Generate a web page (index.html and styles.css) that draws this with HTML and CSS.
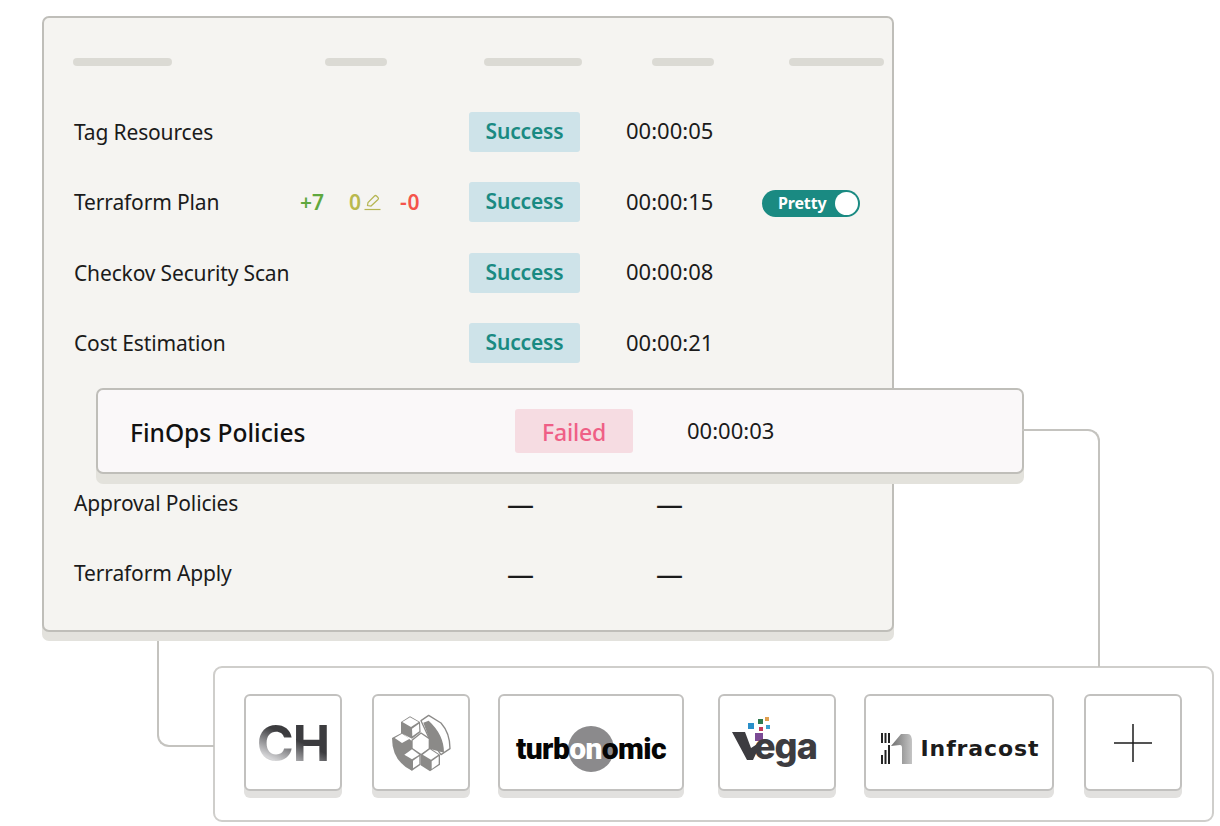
FILE: index.html
```html
<!DOCTYPE html>
<html lang="en">
<head>
    <meta charset="UTF-8">
    <title>Pipeline Steps</title>
    <link rel="stylesheet" href="styles.css">
</head>
<body>
<div class="stage">
    <div class="panel">
        <div class="head-row">
            <span class="bar bar-name"></span>
            <span class="bar bar-changes"></span>
            <span class="bar bar-status"></span>
            <span class="bar bar-time"></span>
            <span class="bar bar-extra"></span>
        </div>

        <div class="step">
            <span class="step-name">Tag Resources</span>
            <span></span>
            <span class="badge">Success</span>
            <span class="step-time">00:00:05</span>
        </div>
        <div class="step">
            <span class="step-name">Terraform Plan</span>
            <span class="changes">
                <span class="added">+7</span>
                <span class="edited">0
                    <svg class="pencil" width="17" height="17" viewBox="0 0 17 17" fill="none" stroke="#b5b552" stroke-width="1.200">
                        <path d="M3.500 11.500 L4 8.500 L10.500 2 Q11.500 1 12.500 2 L14 3.500 Q15 4.500 14 5.500 L7 12 Z"/>
                        <path d="M0.500 15.500 H16.500"/>
                    </svg>
                </span>
                <span class="removed">-0</span>
            </span>
            <span class="badge">Success</span>
            <span class="step-time">00:00:15</span>
            <span class="toggle">Pretty<span class="knob"></span></span>
        </div>
        <div class="step">
            <span class="step-name">Checkov Security Scan</span>
            <span></span>
            <span class="badge">Success</span>
            <span class="step-time">00:00:08</span>
        </div>
        <div class="step">
            <span class="step-name">Cost Estimation</span>
            <span></span>
            <span class="badge">Success</span>
            <span class="step-time">00:00:21</span>
        </div>

        <div class="step-gap"></div>

        <div class="step">
            <span class="step-name">Approval Policies</span>
            <span></span>
            <span class="dash dash-status">—</span>
            <span class="dash">—</span>
        </div>
        <div class="step">
            <span class="step-name">Terraform Apply</span>
            <span></span>
            <span class="dash dash-status">—</span>
            <span class="dash">—</span>
        </div>

        <div class="failed-step">
            <span class="failed-name">FinOps Policies</span>
            <span class="badge-failed">Failed</span>
            <span class="failed-time">00:00:03</span>
        </div>
    </div>

    <div class="line line-left"></div>
    <div class="line line-right"></div>

    <div class="tray">
        <div class="tool tool-square"><span class="logo-ch">CH</span></div>

        <div class="tool tool-square">
            <svg width="70" height="70" viewBox="0 0 210 210" stroke-linejoin="round">
                <!-- back arc -->
                <path d="M105 38 L128 22 L165 45 Q192 75 192 122 L165 140 L130 92 Z" fill="#fff" stroke="#8b8a88" stroke-width="4"/>
                <path d="M112 44 L128 38 Q174 80 174 134 L130 122 L130 92 Z" fill="#8b8a88"/>
                <!-- left body -->
                <path d="M18 90 L48 74 L78 100 L82 170 L78 188 Q18 160 18 90 Z" fill="#8b8a88"/>
                <!-- top cube -->
                <path d="M45 42 L72 25 L102 42 L104 72 L78 92 L45 75 Z" fill="#8b8a88"/>
                <path d="M49 42 L72 28 L98 42 L75 57 Z" fill="#fff"/>
                <path d="M78 62 L99 47 L100 70 L79 85 Z" fill="#fff"/>
                <!-- left top -->
                <path d="M26 90 L48 77 L71 92 L48 105 Z" fill="#fff"/>
                <!-- centre hexagon -->
                <path d="M78 97 L105 75 L130 92 L130 122 L105 140 L78 122 Z" fill="#fff" stroke="#8b8a88" stroke-width="4"/>
                <!-- lower left cube -->
                <path d="M50 140 L78 120 L104 140 L104 170 L78 188 L50 162 Z" fill="#8b8a88"/>
                <path d="M55 140 L78 124 L100 140 L78 154 Z" fill="#fff"/>
                <path d="M81 158 L100 145 L100 168 L81 181 Z" fill="#fff"/>
                <!-- lower right cube -->
                <path d="M104 140 L132 120 L162 140 L162 170 L132 190 L104 172 Z" fill="#8b8a88"/>
                <path d="M110 140 L132 124 L157 140 L135 155 Z" fill="#fff"/>
                <path d="M137 160 L158 145 L158 168 L137 183 Z" fill="#fff"/>
            </svg>
        </div>

        <div class="tool tool-turbo">
            <span class="turbo-circle"></span>
            <span class="logo-turbo">turb<span class="turbo-on">on</span>omic</span>
        </div>

        <div class="tool tool-vega">
            <svg width="92" height="56" viewBox="0 0 92 56">
                <rect x="17" y="8" width="6" height="6" fill="#2a8fc9"/>
                <rect x="27" y="4" width="5" height="5" fill="#2c7a4f"/>
                <rect x="28" y="12" width="4" height="4" fill="#c23a5a"/>
                <rect x="34" y="2" width="4" height="4" fill="#e0a050"/>
                <rect x="35" y="10" width="4" height="4" fill="#3a9fd0"/>
                <rect x="24" y="18" width="8" height="8" fill="#7b4a95"/>
                <path d="M1 17 H14 L20 33 L31 26 L22 45 H16 Z" fill="#3d3c40"/>
                <text class="logo-vega" x="23" y="44">ega</text>
            </svg>
        </div>

        <div class="tool tool-infra">
            <svg width="34" height="34" viewBox="0 0 34 34">
                <defs>
                    <linearGradient id="infraFill" x1="0" y1="0" x2="1" y2="0">
                        <stop offset="0" stop-color="#6f6f6f"/>
                        <stop offset="1" stop-color="#c4c4c4"/>
                    </linearGradient>
                </defs>
                <path d="M2 1h2v10H2zM5.500 1h2v10h-2zM9 1h2v10H9zM2 23h2v9H2zM5.500 18h2v14h-2zM9 13h2v19H9z" fill="#222"/>
                <path d="M12 14 L22 2 H29 Q33 2 33 10 V32 H23 V16 Q23 13 21 13 Z" fill="url(#infraFill)"/>
            </svg>
            <span class="logo-infra">Infracost</span>
        </div>

        <div class="tool tool-square">
            <svg width="38" height="38" viewBox="0 0 38 38" stroke="#1c1c1c" stroke-width="1.500">
                <path d="M0 19 H38 M19 0 V38"/>
            </svg>
        </div>
    </div>
</div>
</body>
</html>
```

FILE: styles.css
```css
body {
    margin: 0;
    background-color: #fff;
    font-family: 'Noto Sans', sans-serif;
    color: #1b1b1b;
}
.stage {
    position: relative;
    width: 1220px;
    height: 826px;
    overflow: hidden;
    padding-top: 16px;
    box-sizing: border-box;
}

/* Main panel */
.panel {
    position: relative;
    box-sizing: border-box;
    width: 852px;
    height: 616px;
    margin-left: 42px;
    padding: 40px 8px 0 30px;
    background-color: #f5f4f1;
    border: 2px solid #bfbeb9;
    border-radius: 7px;
    box-shadow: 0 9px 0 #e3e2dd;
}
.head-row {
    display: grid;
    grid-template-columns: 252px 159px 168px 137px 95px;
    height: 38.8px;
    margin-left: -1px;
}
.bar {
    display: block;
    height: 8px;
    background-color: #dbdad4;
    border-radius: 4px;
}
.bar-name { width: 99px; }
.bar-changes { width: 62px; }
.bar-status { width: 98px; }
.bar-time { width: 62px; }
.bar-extra { width: 95px; }

.step {
    display: grid;
    grid-template-columns: 226px 169px 157px 136px 98px;
    align-items: center;
    height: 70.4px;
    font-size: 21px;
    letter-spacing: -0.15px;
    white-space: nowrap;
}
.step-gap {
    height: 89px;
}
.step-time {
    margin-top: -3px;
    font-size: 22px;
    letter-spacing: 0;
}
.changes {
    display: flex;
    font-size: 21px;
    font-weight: 600;
    letter-spacing: 0;
}
.added {
    width: 49px;
    color: #5fa83f;
}
.edited {
    display: flex;
    align-items: center;
    width: 51px;
    color: #b9b94e;
}
.pencil {
    margin-left: 3px;
}
.removed {
    color: #f4544b;
    letter-spacing: 0.8px;
}
.badge {
    display: block;
    width: 111px;
    height: 40px;
    line-height: 38px;
    text-align: center;
    font-size: 21px;
    font-weight: 600;
    color: #1a8a82;
    background-color: #cee3e9;
    border-radius: 3px;
}
.toggle {
    display: flex;
    justify-content: space-between;
    align-items: center;
    box-sizing: border-box;
    width: 98px;
    height: 27px;
    margin-top: 2px;
    padding: 0 2px 0 16px;
    font-size: 16px;
    font-weight: 700;
    color: #fff;
    background-color: #1a8a82;
    border-radius: 14px;
}
.knob {
    width: 23px;
    height: 23px;
    background-color: #fff;
    border-radius: 50%;
}
.dash {
    width: 27px;
    font-size: 27px;
    line-height: 1;
}
.dash-status {
    margin-left: 38px;
}
.step .dash {
    margin-top: 2px;
}
.step .dash:last-child {
    margin-left: 30px;
}

/* Raised row, sits over the panel */
.failed-step {
    position: absolute;
    left: 52px;
    top: 370px;
    display: flex;
    align-items: center;
    box-sizing: border-box;
    width: 928px;
    height: 86px;
    padding-left: 32px;
    background-color: #faf8f9;
    border: 2px solid #bfbeb9;
    border-radius: 7px;
    box-shadow: 0 10px 0 #e3e2dc;
}
.failed-name {
    width: 385px;
    margin-top: 2px;
    font-size: 24.5px;
    font-weight: 500;
    color: #111;
}
.badge-failed {
    width: 118px;
    height: 44px;
    line-height: 46px;
    text-align: center;
    font-size: 23px;
    font-weight: 500;
    letter-spacing: -0.2px;
    color: #ef5f86;
    background-color: #f6dce2;
    border-radius: 3px;
}
.failed-time {
    margin-left: 54px;
    margin-top: -2px;
    font-size: 22px;
}

/* Connector lines */
.line {
    position: absolute;
    box-sizing: border-box;
    border: 0 solid #c4c3bf;
}
.line-left {
    left: 157px;
    top: 641px;
    width: 57px;
    height: 106px;
    border-left-width: 2px;
    border-bottom-width: 2px;
    border-bottom-left-radius: 12px;
}
.line-right {
    left: 1022px;
    top: 429px;
    width: 78px;
    height: 238px;
    border-top-width: 2px;
    border-right-width: 2px;
    border-top-right-radius: 12px;
}

/* Tool tray */
.tray {
    display: flex;
    box-sizing: border-box;
    width: 1001px;
    height: 156px;
    margin: 34px 0 0 213px;
    padding: 26px 0 0 29px;
    gap: 28px;
    background-color: #fff;
    border: 2px solid #cfcecb;
    border-radius: 9px;
}
.tool {
    position: relative;
    display: flex;
    align-items: center;
    justify-content: center;
    box-sizing: border-box;
    height: 97px;
    background-color: #fff;
    border: 2px solid #c2c1bf;
    border-radius: 6px;
    box-shadow: 0 7px 0 #e2e1df;
}
.tool-square { width: 98px; }
.tool-square:first-child { margin-right: 2px; }
.tool-square:last-child { margin-left: 2px; }
.tool-turbo { width: 186px; }
.tool-vega { width: 118px; margin-left: 6px; }
.tool-infra { width: 190px; gap: 8px; padding-top: 12px; }

.logo-ch {
    font-family: 'Inter', sans-serif;
    font-size: 50px;
    font-weight: 700;
    letter-spacing: -1px;
    background: linear-gradient(205deg, #3c3c3f 45%, #8e8e91 62%, #d6d6d8 78%, #77777a 100%);
    -webkit-background-clip: text;
    background-clip: text;
    color: transparent;
}
.turbo-circle {
    position: absolute;
    left: 68px;
    top: 30px;
    width: 46px;
    height: 46px;
    background-color: #8b8a8c;
    border-radius: 50%;
}
.logo-turbo {
    position: relative;
    margin-top: 12px;
    font-family: 'Roboto', sans-serif;
    font-size: 30px;
    font-weight: 900;
    letter-spacing: -0.6px;
    color: #050505;
}
.turbo-on {
    color: #fff;
}
.logo-vega {
    font-family: 'Inter', sans-serif;
    font-size: 36px;
    font-weight: 800;
    letter-spacing: -1px;
    fill: #3d3c40;
}
.logo-infra {
    font-family: 'DejaVu Sans', sans-serif;
    font-size: 22px;
    font-weight: 700;
    color: #1c1c1c;
    letter-spacing: 0.9px;
}
```
